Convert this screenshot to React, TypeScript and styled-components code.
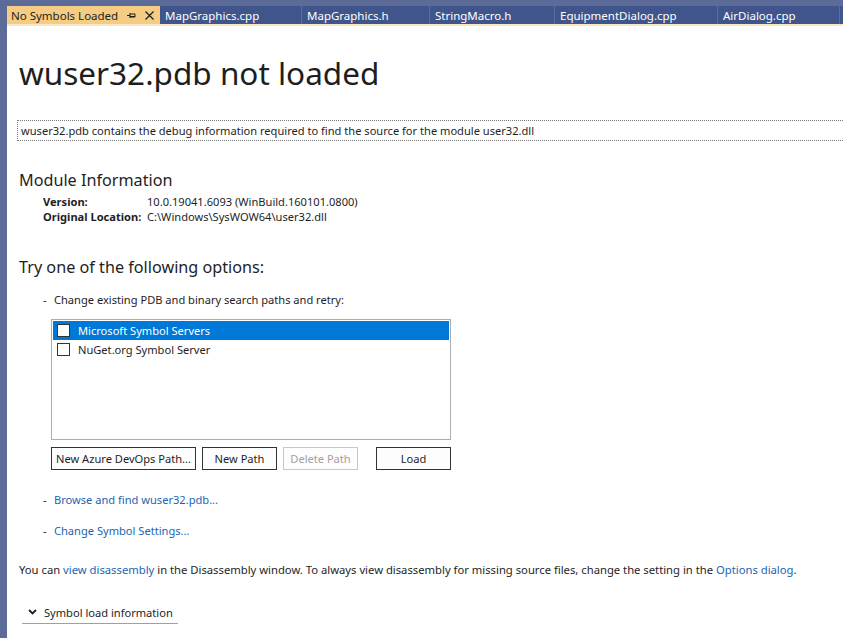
import React from "react";
import styled, { createGlobalStyle } from "styled-components";

const Global = createGlobalStyle`
  html, body { margin: 0; padding: 0; background: #ffffff; }
  body { overflow: hidden; font-family: "Noto Sans", "Segoe UI", sans-serif; color: #1e1e1e; }
  * { box-sizing: border-box; }
`;

const BODY = "11.1px";

const Frame = styled.div`
  display: flex;
  width: 843px;
  height: 638px;
  overflow: hidden;
`;

const WindowEdge = styled.div`
  width: 7px;
  flex: none;
  background: #5d6b99;
`;

const Main = styled.div`
  flex: 1;
  min-width: 0;
  display: flex;
  flex-direction: column;
  background: #ffffff;
`;

const TabStrip = styled.div`
  display: flex;
  align-items: flex-end;
  height: 24px;
  padding-top: 6px;
  background: #5d6b99;
  white-space: nowrap;
  overflow: hidden;
`;

const Tab = styled.div<{ $w: number; $active?: boolean }>`
  flex: none;
  width: ${(p) => p.$w}px;
  height: 18px;
  display: flex;
  align-items: center;
  padding-left: ${(p) => (p.$active ? 4 : 5)}px;
  margin-right: ${(p) => (p.$active ? 0 : 1)}px;
  background: ${(p) => (p.$active ? "#f5cc84" : "#3f558c")};
  color: ${(p) => (p.$active ? "#1e1e1e" : "#ffffff")};
  font-size: 11.5px;
`;

const TabLabel = styled.span`
  flex: 1;
`;

const TabIcon = styled.span`
  display: flex;
  align-items: center;
  justify-content: center;
  width: 14px;
  height: 14px;
  margin-right: 4px;
  color: #1e1e1e;
`;

const AccentLine = styled.div`
  height: 2px;
  background: #fbe7c0;
`;

const Content = styled.div`
  padding: 0 0 0 12px;
  display: flex;
  flex-direction: column;
`;

const Title = styled.h1`
  margin: 27px 0 0 0;
  font-weight: 400;
  font-size: 31.5px;
  line-height: 40px;
  color: #1e1e1e;
  white-space: nowrap;
`;

const Description = styled.div`
  margin: 27px 0 0 -2px;
  height: 21px;
  border: 1px dotted #7a7a7a;
  border-right: none;
  padding-left: 3px;
  font-size: ${BODY};
  line-height: 19px;
  white-space: nowrap;
`;

const Heading = styled.h2<{ $top: number }>`
  margin: ${(p) => p.$top}px 0 0 0;
  font-weight: 400;
  font-size: 16.2px;
  line-height: 22px;
  color: #1e1e1e;
`;

const InfoGrid = styled.div`
  margin: 3px 0 0 24px;
  display: grid;
  grid-template-columns: 104px auto;
  font-size: ${BODY};
  line-height: 15px;
`;

const InfoLabel = styled.span`
  font-weight: 700;
`;

const Bullet = styled.div<{ $top: number }>`
  margin: ${(p) => p.$top}px 0 0 24px;
  display: flex;
  font-size: ${BODY};
  line-height: 16px;
`;

const Dash = styled.span`
  width: 11px;
  flex: none;
`;

const Link = styled.a`
  color: #1c64b4;
  text-decoration: none;
  cursor: pointer;
`;

const ListBox = styled.div`
  margin: 11px 0 0 32px;
  width: 400px;
  height: 121px;
  border: 1px solid #abadb3;
  padding: 1px;
  display: flex;
  flex-direction: column;
`;

const ListItem = styled.div<{ $selected?: boolean }>`
  height: 19px;
  display: flex;
  align-items: center;
  padding-left: 4px;
  gap: 8px;
  background: ${(p) => (p.$selected ? "#0078d7" : "transparent")};
  color: ${(p) => (p.$selected ? "#ffffff" : "#1e1e1e")};
  font-size: ${BODY};
`;

const CheckBox = styled.span`
  width: 13px;
  height: 13px;
  background: #ffffff;
  border: 1px solid #333333;
  flex: none;
`;

const ButtonRow = styled.div`
  margin: 7px 0 0 32px;
  display: flex;
  gap: 6px;
`;

const Button = styled.button<{ $w: number; $gapBefore?: number }>`
  width: ${(p) => p.$w}px;
  height: 23px;
  margin-left: ${(p) => p.$gapBefore ?? 0}px;
  padding: 0;
  font-family: inherit;
  font-size: ${BODY};
  background: #fdfdfd;
  color: #1e1e1e;
  border: 1px solid #333337;
  &:disabled {
    color: #a2a2a2;
    border-color: #c8c8c8;
    background: #fdfdfd;
  }
`;

const Paragraph = styled.p`
  margin: 23px 0 0 0;
  font-size: 11.25px;
  line-height: 16px;
  white-space: nowrap;
`;

const Expander = styled.div`
  margin: 23px 0 0 3px;
  width: 156px;
  height: 23px;
  display: flex;
  align-items: center;
  gap: 7px;
  padding-left: 6px;
  border-bottom: 1px solid #a0a0a0;
  font-size: ${BODY};
`;

const PinIcon = () => (
  <svg width="9" height="9" viewBox="0 0 9 9" fill="none">
    <path d="M0 4.5h3M3 2v5M3 3h5v3H3M3 5.5h5" stroke="#1e1e1e" strokeWidth="1" />
  </svg>
);

const CloseIcon = () => (
  <svg width="9" height="9" viewBox="0 0 9 9">
    <path d="M0.5 0.5l8 8M8.5 0.5l-8 8" stroke="#1e1e1e" strokeWidth="1.2" />
  </svg>
);

const Chevron = () => (
  <svg width="9" height="6" viewBox="0 0 9 6">
    <path d="M1 1l3.5 3.5L8 1" stroke="#1e1e1e" strokeWidth="1.8" fill="none" />
  </svg>
);

const tabs = [
  { label: "MapGraphics.cpp", w: 141 },
  { label: "MapGraphics.h", w: 127 },
  { label: "StringMacro.h", w: 124 },
  { label: "EquipmentDialog.cpp", w: 162 },
  { label: "AirDialog.cpp", w: 121 },
  { label: "", w: 40 },
];

export default function App() {
  return (
    <>
      <Global />
      <Frame>
        <WindowEdge />
        <Main>
          <TabStrip>
            <Tab $w={153} $active>
              <TabLabel>No Symbols Loaded</TabLabel>
              <TabIcon>
                <PinIcon />
              </TabIcon>
              <TabIcon>
                <CloseIcon />
              </TabIcon>
            </Tab>
            {tabs.map((t, i) => (
              <Tab key={i} $w={t.w}>
                {t.label}
              </Tab>
            ))}
          </TabStrip>
          <AccentLine />
          <Content>
            <Title>wuser32.pdb not loaded</Title>
            <Description>
              wuser32.pdb contains the debug information required to find the source for the module user32.dll
            </Description>
            <Heading $top={28}>Module Information</Heading>
            <InfoGrid>
              <InfoLabel>Version:</InfoLabel>
              <span>10.0.19041.6093 (WinBuild.160101.0800)</span>
              <InfoLabel>Original Location:</InfoLabel>
              <span>C:\Windows\SysWOW64\user32.dll</span>
            </InfoGrid>
            <Heading $top={32}>Try one of the following options:</Heading>
            <Bullet $top={14}>
              <Dash>-</Dash>
              <span>Change existing PDB and binary search paths and retry:</span>
            </Bullet>
            <ListBox>
              <ListItem $selected>
                <CheckBox />
                <span>Microsoft Symbol Servers</span>
              </ListItem>
              <ListItem>
                <CheckBox />
                <span>NuGet.org Symbol Server</span>
              </ListItem>
            </ListBox>
            <ButtonRow>
              <Button $w={145}>New Azure DevOps Path...</Button>
              <Button $w={75}>New Path</Button>
              <Button $w={75} disabled>
                Delete Path
              </Button>
              <Button $w={75} $gapBefore={12}>
                Load
              </Button>
            </ButtonRow>
            <Bullet $top={22}>
              <Dash>-</Dash>
              <Link>Browse and find wuser32.pdb...</Link>
            </Bullet>
            <Bullet $top={15}>
              <Dash>-</Dash>
              <Link>Change Symbol Settings...</Link>
            </Bullet>
            <Paragraph>
              You can <Link>view disassembly</Link> in the Disassembly window. To always view disassembly for missing
              source files, change the setting in the <Link>Options dialog</Link>.
            </Paragraph>
            <Expander>
              <Chevron />
              <span>Symbol load information</span>
            </Expander>
          </Content>
        </Main>
      </Frame>
    </>
  );
}
